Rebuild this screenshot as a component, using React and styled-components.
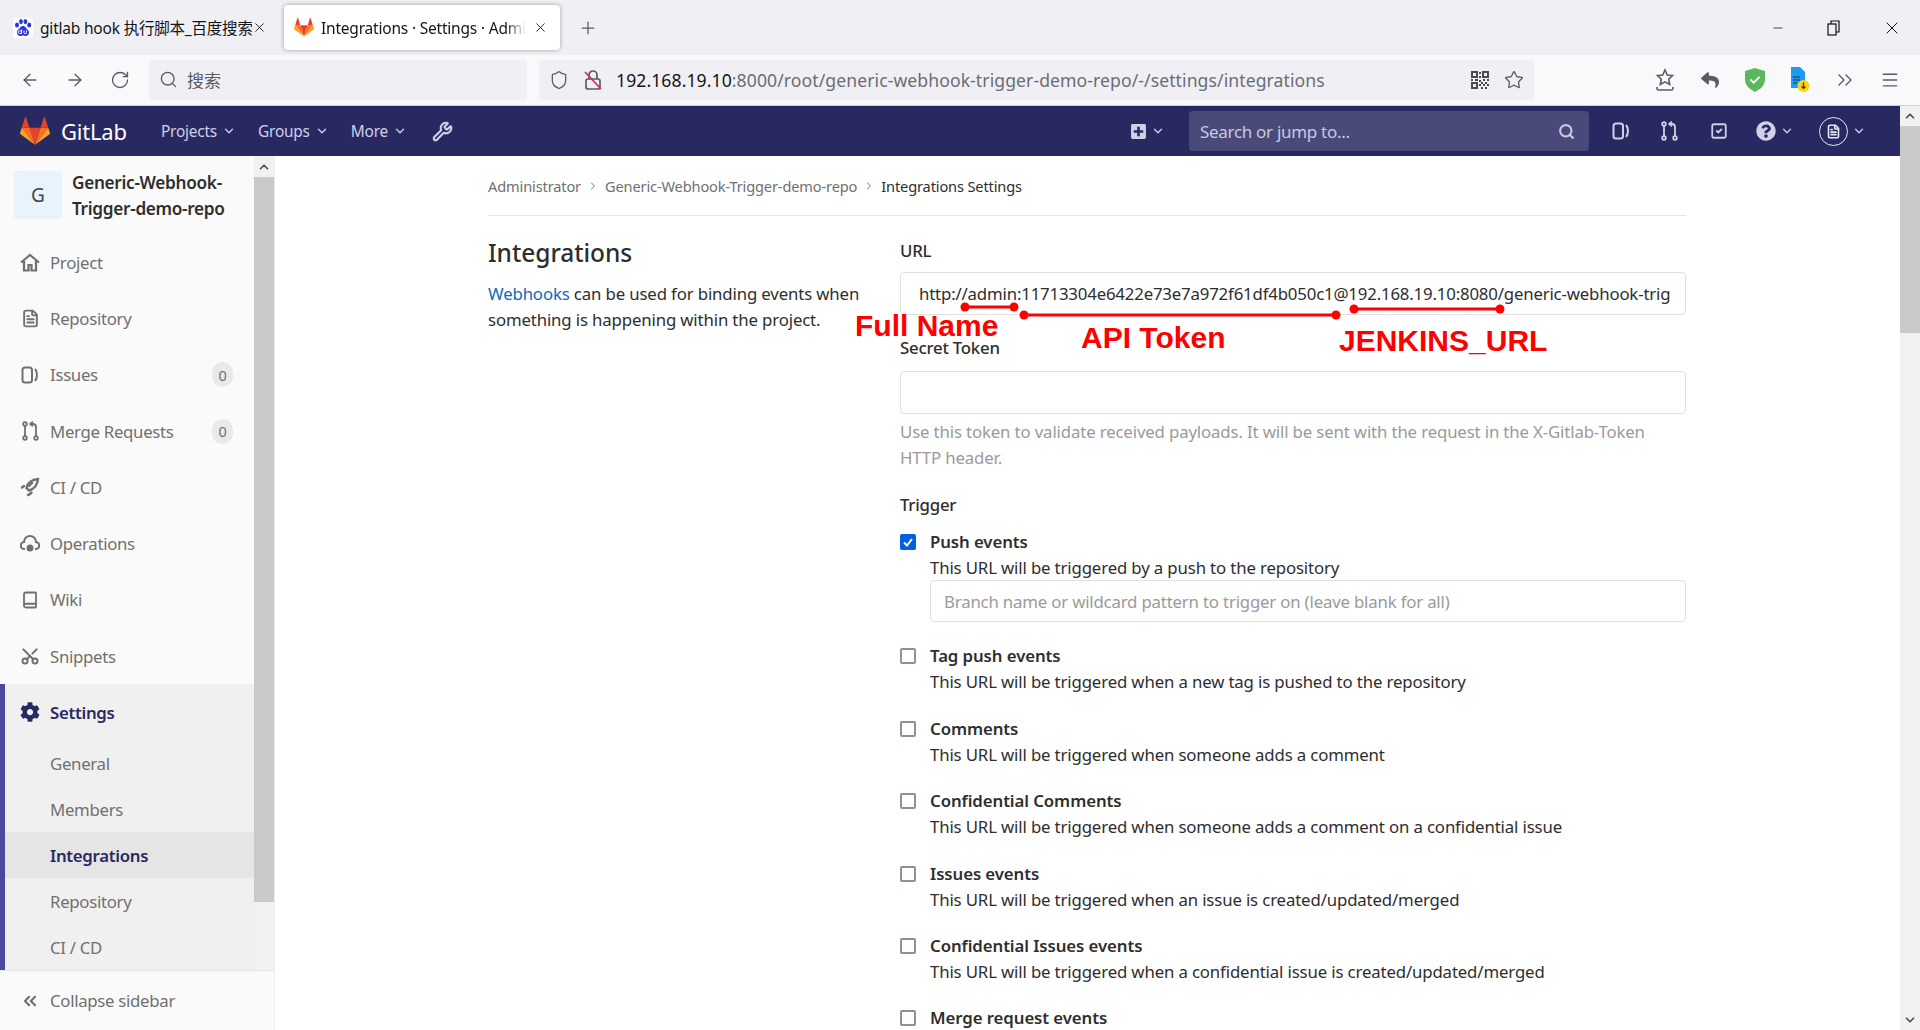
import React from 'react';
import styled, { createGlobalStyle } from 'styled-components';
import {
  ArrowLeft, ArrowRight, RotateCw, Search, Shield, Star, ChevronsRight, Menu, X, Minus, Plus,
  ChevronDown, ChevronUp, ChevronRight, Wrench, FileText, Book, Scissors, ChevronsLeft, SquareCheck,
} from 'lucide-react';
import { FaCog, FaReply, FaQuestionCircle, FaPlusSquare } from 'react-icons/fa';

const GlobalStyle = createGlobalStyle`
  html, body { margin: 0; padding: 0; height: 100%; overflow: hidden; }
  body { font-family: "Noto Sans", "Noto Sans CJK SC", sans-serif; font-size: 16.8px; color: #2e2e2e; background: #fff; }
  * { box-sizing: border-box; }
`;

const Page = styled.div`
  height: 100vh;
  display: flex;
  flex-direction: column;
  overflow: hidden;
`;

/* browser chrome */
const TabStrip = styled.div`
  height: 55px;
  flex: none;
  background: #f0f0f4;
  display: flex;
  align-items: flex-start;
  padding: 5px 0 0 0;
`;

const Tab = styled.div`
  width: ${(p) => (p.$active ? '276px' : '284px')};
  height: 45px;
  flex: none;
  display: flex;
  align-items: center;
  padding-left: ${(p) => (p.$active ? '10px' : '13px')};
  gap: 7px;
  border-radius: 4px;
  background: ${(p) => (p.$active ? '#fff' : 'transparent')};
  box-shadow: ${(p) => (p.$active ? '0 0 4px rgba(0,0,0,0.35)' : 'none')};
  font-size: 15.5px;
  letter-spacing: -0.2px;
  color: #15141a;
`;

const TabTitle = styled.span`
  width: ${(p) => (p.$active ? '205px' : '212px')};
  white-space: nowrap;
  overflow: hidden;
  -webkit-mask-image: ${(p) => (p.$active ? 'linear-gradient(to right, #000 90%, transparent)' : 'none')};
  mask-image: ${(p) => (p.$active ? 'linear-gradient(to right, #000 90%, transparent)' : 'none')};
`;

const TabClose = styled(X)`
  margin-left: ${(p) => p.$ml || 0}px;
  flex: none;
`;

const NewTab = styled.div`
  margin-left: 18px;
  height: 45px;
  display: flex;
  align-items: center;
  color: #5b5b66;
`;

const WindowControls = styled.div`
  margin-left: auto;
  height: 45px;
  width: 149px;
  display: flex;
  align-items: center;
  justify-content: space-between;
  padding: 0 18px 0 0;
  color: #111;
`;

const Toolbar = styled.div`
  height: 51px;
  flex: none;
  background: #f9f9fb;
  border-bottom: 1px solid #cfcfd8;
  display: flex;
  align-items: center;
  padding: 0 0 1px 20px;
`;

const ToolButtons = styled.div`
  display: flex;
  gap: 25px;
  color: #5b5b66;
  width: 129px;
`;

const ToolField = styled.div`
  height: 40px;
  width: ${(p) => p.$w}px;
  margin-right: 12px;
  padding: 0 10px;
  flex: none;
  background: #f0f0f4;
  border-radius: 4px;
  display: flex;
  align-items: center;
  color: #5b5b66;
`;

const SiteIcons = styled.div`
  display: flex;
  align-items: center;
  gap: 14px;
`;

const SearchHint = styled.span`
  margin-left: 9px;
  font-size: 17px;
  color: #5b5b66;
`;

const Address = styled.span`
  margin-left: 13px;
  font-size: 17.6px;
  letter-spacing: 0.08px;
  color: #6c6c75;
  white-space: nowrap;
  flex: 1;
  b { font-weight: 400; color: #15141a; }
`;

const PageActions = styled.div`
  display: flex;
  align-items: center;
  gap: 15px;
`;

const ToolExtras = styled.div`
  flex: 1;
  display: flex;
  align-items: center;
  justify-content: space-between;
  padding: 0 18px 0 107px;
  color: #5b5b66;
`;

const ExtraCell = styled.span`
  width: 24px;
  display: flex;
  align-items: center;
  justify-content: center;
`;

const Below = styled.div`
  flex: 1;
  min-height: 0;
  display: flex;
`;

const Viewport = styled.div`
  flex: 1;
  min-width: 0;
  display: flex;
  flex-direction: column;
`;

const Scrollbar = styled.div`
  width: ${(p) => p.$w}px;
  flex: none;
  background: #f1f1f1;
  display: flex;
  flex-direction: column;
  color: #505050;
`;

const ScrollArrow = styled.div`
  height: ${(p) => p.$h}px;
  flex: none;
  display: flex;
  align-items: center;
  justify-content: center;
`;

const ScrollThumb = styled.div`
  height: ${(p) => p.$h}px;
  flex: none;
  background: #c9c9c9;
`;

const ScrollSpace = styled.div`
  flex: 1;
`;

/* gitlab navbar */
const Navbar = styled.header`
  height: 50px;
  flex: none;
  background: #292961;
  display: flex;
  align-items: center;
  padding-left: 20px;
  color: #d1d0e8;
`;

const Brand = styled.div`
  display: flex;
  align-items: center;
  gap: 11px;
  width: 141px;
  font-size: 22px;
  letter-spacing: -0.2px;
  color: #fff;
`;

const NavLink = styled.div`
  display: flex;
  align-items: center;
  gap: 5px;
  margin-right: 22px;
  font-size: 15.4px;
  letter-spacing: -0.2px;
`;

const NavRight = styled.div`
  margin-left: auto;
  display: flex;
  align-items: center;
`;

const NavIcon = styled.div`
  display: flex;
  align-items: center;
  gap: 4px;
  width: ${(p) => p.$w}px;
`;

const NavSearch = styled.div`
  width: 400px;
  height: 40px;
  margin-right: 23px;
  border-radius: 4px;
  background: #4a4a7a;
  display: flex;
  align-items: center;
  justify-content: space-between;
  padding: 0 14px 0 11px;
  font-size: 17px;
  letter-spacing: -0.3px;
  color: #c9c8e0;
`;

const WrenchIcon = styled(Wrench)`
  margin-left: 3px;
`;

const Avatar = styled.div`
  width: 29px;
  height: 29px;
  border-radius: 50%;
  border: 1px solid #e6e6f2;
  display: flex;
  align-items: center;
  justify-content: center;
  background: #292961;
`;

const Content = styled.div`
  flex: 1;
  min-height: 0;
  display: flex;
`;

/* sidebar */
const Sidebar = styled.aside`
  width: 275px;
  flex: none;
  display: flex;
  flex-direction: column;
  background: #fafafa;
  border-right: 1px solid #ededed;
`;

const SidebarTop = styled.div`
  flex: 1;
  min-height: 0;
  display: flex;
`;

const SidebarNav = styled.nav`
  flex: 1;
  min-width: 0;
  display: flex;
  flex-direction: column;
`;

const ProjectHead = styled.div`
  height: 78px;
  flex: none;
  display: flex;
  padding: 15px 0 0 14px;
  gap: 10px;
`;

const ProjectAvatar = styled.div`
  width: 48px;
  height: 48px;
  flex: none;
  border-radius: 4px;
  background: #e8f3fc;
  display: flex;
  align-items: center;
  justify-content: center;
  font-size: 19px;
  color: #444;
`;

const ProjectName = styled.div`
  margin-top: -1px;
  font-size: 17.2px;
  font-weight: 600;
  line-height: 26px;
  letter-spacing: -0.3px;
  color: #2e2e2e;
`;

const NavItem = styled.div`
  height: 56.3px;
  flex: none;
  display: flex;
  align-items: center;
  padding-left: 20px;
  color: #707070;
  font-size: 16.8px;
  letter-spacing: -0.3px;
`;

const NavIconBox = styled.span`
  width: 20px;
  height: 20px;
  margin-right: 10px;
  display: flex;
  align-items: center;
  justify-content: center;
`;

const Badge = styled.span`
  margin-left: auto;
  margin-right: 21px;
  width: 21px;
  height: 25px;
  border-radius: 11px;
  background: #e9e9e9;
  display: flex;
  align-items: center;
  justify-content: center;
  font-size: 14.5px;
  color: #707070;
`;

const SettingsGroup = styled.div`
  background: #f0f0f0;
  border-left: 5px solid #4b4a9e;
  flex: 1;
  display: flex;
  flex-direction: column;
`;

const SettingsHead = styled.div`
  height: 56px;
  display: flex;
  align-items: center;
  padding-left: 15px;
  color: #292961;
  font-weight: 600;
  font-size: 16.8px;
  letter-spacing: -0.3px;
`;

const SubItem = styled.div`
  height: 46px;
  display: flex;
  align-items: center;
  padding-left: 45px;
  font-size: 16.8px;
  letter-spacing: -0.3px;
  color: ${(p) => (p.$active ? '#292961' : '#707070')};
  font-weight: ${(p) => (p.$active ? 600 : 400)};
  background: ${(p) => (p.$active ? '#e5e5e5' : 'transparent')};
`;

const Collapse = styled.div`
  height: 60px;
  flex: none;
  display: flex;
  align-items: center;
  padding-left: 20px;
  border-top: 1px solid #e5e5e5;
  color: #707070;
  font-size: 16.8px;
  letter-spacing: -0.3px;
`;

const UprightScissors = styled(Scissors)`
  transform: rotate(-90deg);
`;

/* main area */
const Main = styled.main`
  flex: 1;
  min-width: 0;
  position: relative;
  overflow: hidden;
  padding-left: 213px;
`;

const Column = styled.div`
  width: 1198px;
`;

const Breadcrumbs = styled.div`
  height: 60px;
  border-bottom: 1px solid #e5e5e5;
  display: flex;
  align-items: center;
  gap: 6px;
  font-size: 14.6px;
  letter-spacing: -0.14px;
  color: #707070;
  strong { font-weight: 400; color: #2e2e2e; }
`;

const Crumb = styled.span`
  color: #707070;
  display: flex;
  align-items: center;
`;

const SettingsGrid = styled.div`
  display: grid;
  grid-template-columns: 412px 786px;
`;

const Intro = styled.div`
  padding-top: 19px;
`;

const Heading = styled.h4`
  margin: 0;
  font-size: 24.5px;
  font-weight: 500;
  line-height: 36px;
  letter-spacing: -0.05px;
  color: #2e2e2e;
`;

const IntroText = styled.p`
  margin: 10px 0 0;
  width: 400px;
  line-height: 26px;
  letter-spacing: -0.14px;
  a { color: #1068bf; }
`;

const Form = styled.div`
  padding-top: 22px;
`;

const Label = styled.div`
  line-height: 26px;
  font-weight: 500;
  letter-spacing: -0.22px;
  color: #2e2e2e;
  margin-top: ${(p) => p.$top || 0}px;
`;

const Field = styled.div`
  height: ${(p) => p.$h || 43}px;
  margin-top: ${(p) => p.$top || 0}px;
  margin-bottom: ${(p) => p.$bottom || 0}px;
  border: 1px solid #e0e0e0;
  border-radius: 4px;
  display: flex;
  align-items: center;
  padding-left: ${(p) => p.$pad || 14}px;
  white-space: nowrap;
  overflow: hidden;
  letter-spacing: ${(p) => p.$ls || -0.14}px;
  color: ${(p) => (p.$hint ? '#9a9a9a' : '#2e2e2e')};
`;

const HelpText = styled.div`
  margin-top: 5px;
  line-height: 26px;
  letter-spacing: -0.14px;
  color: #9a9a9a;
`;

const EventList = styled.div`
  margin-top: 11px;
  display: flex;
  flex-direction: column;
  gap: 20.4px;
`;

const EventRow = styled.div`
  display: grid;
  grid-template-columns: 30px 1fr;
`;

const CheckBox = styled.span`
  width: 16px;
  height: 16px;
  margin-top: 5px;
  border-radius: 2px;
  border: ${(p) => (p.$on ? 'none' : '2px solid #8f8f9d')};
  background: ${(p) => (p.$on ? '#0060df' : '#fff')};
  display: flex;
  align-items: center;
  justify-content: center;
`;

const EventName = styled.div`
  font-weight: 600;
  line-height: 26px;
  letter-spacing: -0.08px;
  color: #2e2e2e;
`;

const EventDesc = styled.div`
  line-height: 26px;
  letter-spacing: -0.14px;
  color: #2e2e2e;
`;

/* red notes drawn over the screenshot */
const Markup = styled.svg`
  position: absolute;
  left: 0;
  top: 0;
  width: 1625px;
  height: 300px;
  pointer-events: none;
`;

const Note = styled.span`
  position: absolute;
  left: ${(p) => p.$x}px;
  top: ${(p) => p.$y}px;
  font-family: "Liberation Sans", Arial, sans-serif;
  font-weight: 700;
  font-size: 30px;
  line-height: 32px;
  color: #ff0000;
  white-space: nowrap;
`;

const Fox = ({ size = 20 }) => (
  <svg width={size} height={size * 0.93} viewBox="0 0 210 194">
    <path fill="#e24329" d="M105.06 193.66l38.64-118.92H66.42z" />
    <path fill="#fc6d26" d="M105.06 193.66L66.42 74.74H12.27z" />
    <path fill="#fca326" d="M12.27 74.74L.53 110.87a8 8 0 0 0 2.9 8.94l101.63 73.85z" />
    <path fill="#e24329" d="M12.27 74.74h54.15L43.15 3.12c-1.2-3.68-6.4-3.68-7.6 0z" />
    <path fill="#fc6d26" d="M105.06 193.66l38.64-118.92h54.15z" />
    <path fill="#fca326" d="M197.85 74.74l11.74 36.13a8 8 0 0 1-2.9 8.94l-101.63 73.85z" />
    <path fill="#e24329" d="M197.85 74.74H143.7l23.27-71.62c1.2-3.68 6.4-3.68 7.6 0z" />
  </svg>
);

const BaiduPaw = () => (
  <svg width="20" height="20" viewBox="0 0 20 20">
    <rect width="20" height="20" rx="2" fill="#fff" />
    <g fill="#2932e1">
      <ellipse cx="4" cy="7" rx="2" ry="2.6" />
      <ellipse cx="8" cy="3.6" rx="1.9" ry="2.6" />
      <ellipse cx="12.4" cy="3.6" rx="1.9" ry="2.6" />
      <ellipse cx="16.2" cy="7" rx="2" ry="2.6" />
      <path d="M10 8c-2.5 0-3 2.5-5 4-2 2-.8 6 2 6 1.2 0 2-.5 3-.5s1.8.5 3 .5c2.8 0 4-4 2-6-2-1.5-2.5-4-5-4z" />
    </g>
    <path d="M8.6 11.5v4h-2a1.3 1.3 0 0 1 0-2.6h2M11 12.5v2a1 1 0 0 0 2.5 0v-2" fill="none" stroke="#fff" strokeWidth="1" />
  </svg>
);

const RestoreIcon = () => (
  <svg width="14" height="18" viewBox="0 0 14 18" fill="none" stroke="#111" strokeWidth="1.2">
    <rect x="1" y="5" width="8" height="11" />
    <path d="M4 5V2h8v11H9" />
  </svg>
);

const CrossedLock = () => (
  <svg width="20" height="22" viewBox="0 0 20 22" fill="none" stroke="#5b5b66" strokeWidth="1.7">
    <rect x="3" y="10" width="14" height="10" rx="2" />
    <path d="M6 10V6a4 4 0 0 1 8 0v4" />
    <path d="M2 3l16 17" stroke="#e22850" />
  </svg>
);

const QrIcon = () => (
  <svg width="18" height="18" viewBox="0 0 18 18" fill="#4a4a52">
    <path fillRule="evenodd" d="M0 0h7v7H0zM2 2v3h3V2zM11 0h7v7h-7zM13 2v3h3V2zM0 11h7v7H0zM2 13v3h3v-3z" />
    <path d="M8 1h2v2H8zM8 5h2v2H8zM0 8h2v2H0zM4 8h3v2H4zM8 9h2v2H8zM12 8h2v2h-2zM16 8h2v2h-2zM10 11h2v2h-2zM14 11h2v2h-2zM8 13h2v2H8zM12 13h2v2h-2zM16 13h2v2h-2zM10 16h2v2h-2zM14 16h2v2h-2z" />
  </svg>
);

const HomeIcon = () => (
  <svg width="20" height="19" viewBox="0 0 20 19" fill="none" stroke="#707070" strokeWidth="2.2">
    <path d="M1 9.5L10 2l9 7.5" />
    <path d="M4 8v9.5h4.5V12h3v5.5H16V8" />
  </svg>
);

const IssuesIcon = ({ size = 18, color = '#707070' }) => (
  <svg width={size} height={size} viewBox="0 0 18 18" fill="none" stroke={color} strokeWidth="2">
    <rect x="1.5" y="1.5" width="9.5" height="15" rx="2.5" />
    <path d="M14 3c2.6 2.5 2.6 9.5 0 12" />
  </svg>
);

const MergeIcon = ({ color = '#707070' }) => (
  <svg width="17" height="20" viewBox="0 0 17 20" fill="none" stroke={color} strokeWidth="1.8">
    <circle cx="3" cy="3" r="1.8" />
    <circle cx="3" cy="17" r="1.8" />
    <circle cx="14" cy="17" r="1.8" />
    <path d="M3 5v10M14 15V6a3 3 0 0 0-3-3H8.5" />
    <path d="M11 .5L8 3l3 2.5" strokeWidth="1.6" />
  </svg>
);

const RocketIcon = () => (
  <svg width="20" height="20" viewBox="0 0 20 20" fill="none" stroke="#707070" strokeWidth="2.4" strokeLinecap="round">
    <path d="M18 2C12 2.5 7.5 6 6.5 11L9 13.5C14 12 17.5 8 18 2z" />
    <path d="M2 10.5L4 9M8 18c1.2-.3 2.500-1.200 3.500-2.500M9 9l3-3" />
  </svg>
);

const CloudGear = () => (
  <svg width="20" height="18" viewBox="0 0 20 18" fill="none" stroke="#707070" strokeWidth="2">
    <path d="M5 14H4.5a3.5 3.5 0 0 1-.5-7 6 6 0 0 1 12 0 3.5 3.5 0 0 1-.5 7H15" />
    <circle cx="10" cy="13" r="2.5" fill="#707070" />
  </svg>
);

const ShieldOk = () => (
  <svg width="20" height="24" viewBox="0 0 20 24">
    <path d="M10 0l10 3v8c0 6-4 10-10 13C4 21 0 17 0 11V3z" fill="#5cb85c" />
    <path d="M5.5 11.5l3.2 3.3 5.8-6" fill="none" stroke="#fff" strokeWidth="1.8" />
  </svg>
);

const FileExt = () => (
  <svg width="20" height="26" viewBox="0 0 20 26">
    <path d="M1 0h9l5 5v16H1z" fill="#1d9bf0" />
    <path d="M3 10h7M3 13h7M3 16h4" stroke="#145c96" strokeWidth="1.4" />
    <circle cx="13.5" cy="19" r="6" fill="#fcd116" />
    <path d="M13.5 15.5v6M11.5 19.5l2 2 2-2" fill="none" stroke="#333" strokeWidth="1.2" />
  </svg>
);

const SaveStar = () => (
  <svg width="20" height="24" viewBox="0 0 20 24" fill="none" stroke="#5b5b66" strokeWidth="1.6">
    <path d="M10 2l2.3 5 5.2.6-3.800 3.600 1 5.300-4.700-2.700-4.700 2.700 1-5.300L2.500 7.600 7.700 7z" />
    <path d="M2 19v1.5A1.5 1.5 0 0 0 3.500 22h13a1.500 1.500 0 0 0 1.500-1.500V19" />
  </svg>
);

const navItems = [
  { label: 'Project', icon: <HomeIcon /> },
  { label: 'Repository', icon: <FileText size={19} strokeWidth={2.4} /> },
  { label: 'Issues', icon: <IssuesIcon />, count: 0 },
  { label: 'Merge Requests', icon: <MergeIcon />, count: 0 },
  { label: 'CI / CD', icon: <RocketIcon /> },
  { label: 'Operations', icon: <CloudGear /> },
  { label: 'Wiki', icon: <Book size={18} strokeWidth={2.4} /> },
  { label: 'Snippets', icon: <UprightScissors size={20} strokeWidth={2.4} /> },
];

const subItems = [
  { label: 'General' },
  { label: 'Members' },
  { label: 'Integrations', active: true },
  { label: 'Repository' },
  { label: 'CI / CD' },
];

const events = [
  { name: 'Tag push events', desc: 'This URL will be triggered when a new tag is pushed to the repository' },
  { name: 'Comments', desc: 'This URL will be triggered when someone adds a comment' },
  { name: 'Confidential Comments', desc: 'This URL will be triggered when someone adds a comment on a confidential issue' },
  { name: 'Issues events', desc: 'This URL will be triggered when an issue is created/updated/merged' },
  { name: 'Confidential Issues events', desc: 'This URL will be triggered when a confidential issue is created/updated/merged' },
  { name: 'Merge request events' },
];

const segments = [
  { x1: 690, x2: 739, y: 151 },
  { x1: 749, x2: 1061, y: 159 },
  { x1: 1079, x2: 1225, y: 153 },
];

export default function App() {
  return (
    <Page>
      <GlobalStyle />
      <TabStrip>
        <Tab>
          <BaiduPaw />
          <TabTitle>gitlab hook 执行脚本_百度搜索</TabTitle>
          <TabClose size={15} strokeWidth={1.4} $ml={-7} />
        </Tab>
        <Tab $active>
          <Fox size={20} />
          <TabTitle $active>Integrations · Settings · Administrator</TabTitle>
          <TabClose size={15} strokeWidth={1.4} />
        </Tab>
        <NewTab><Plus size={20} strokeWidth={1.5} /></NewTab>
        <WindowControls>
          <Minus size={14} strokeWidth={1.3} />
          <RestoreIcon />
          <X size={20} strokeWidth={1.2} />
        </WindowControls>
      </TabStrip>

      <Toolbar>
        <ToolButtons>
          <ArrowLeft size={20} strokeWidth={1.6} />
          <ArrowRight size={20} strokeWidth={1.6} />
          <RotateCw size={20} strokeWidth={1.6} />
        </ToolButtons>
        <ToolField $w={378}>
          <Search size={19} strokeWidth={1.7} />
          <SearchHint>搜索</SearchHint>
        </ToolField>
        <ToolField $w={995}>
          <SiteIcons>
            <Shield size={20} strokeWidth={1.6} />
            <CrossedLock />
          </SiteIcons>
          <Address><b>192.168.19.10</b>:8000/root/generic-webhook-trigger-demo-repo/-/settings/integrations</Address>
          <PageActions>
            <QrIcon />
            <Star size={20} strokeWidth={1.6} />
          </PageActions>
        </ToolField>
        <ToolExtras>
          <ExtraCell><SaveStar /></ExtraCell>
          <ExtraCell><FaReply size={18} /></ExtraCell>
          <ExtraCell><ShieldOk /></ExtraCell>
          <ExtraCell><FileExt /></ExtraCell>
          <ExtraCell><ChevronsRight size={24} strokeWidth={1.4} /></ExtraCell>
          <ExtraCell><Menu size={20} strokeWidth={1.7} /></ExtraCell>
        </ToolExtras>
      </Toolbar>

      <Below>
        <Viewport>
          <Navbar>
            <Brand><Fox size={30} />GitLab</Brand>
            <NavLink>Projects <ChevronDown size={14} strokeWidth={2.2} /></NavLink>
            <NavLink>Groups <ChevronDown size={14} strokeWidth={2.2} /></NavLink>
            <NavLink>More <ChevronDown size={14} strokeWidth={2.2} /></NavLink>
            <WrenchIcon size={21} strokeWidth={2.4} />
            <NavRight>
              <NavIcon $w={59}><FaPlusSquare size={17} /><ChevronDown size={14} strokeWidth={2.2} /></NavIcon>
              <NavSearch>Search or jump to...<Search size={17} strokeWidth={3} /></NavSearch>
              <NavIcon $w={49}><IssuesIcon size={18} color="#d1d0e8" /></NavIcon>
              <NavIcon $w={49}><MergeIcon color="#d1d0e8" /></NavIcon>
              <NavIcon $w={46}><SquareCheck size={18} strokeWidth={2.4} /></NavIcon>
              <NavIcon $w={63}><FaQuestionCircle size={20} /><ChevronDown size={14} strokeWidth={2.2} /></NavIcon>
              <NavIcon $w={81}><Avatar><FileText size={15} strokeWidth={2.6} color="#e6e6f2" /></Avatar><ChevronDown size={14} strokeWidth={2.2} /></NavIcon>
            </NavRight>
          </Navbar>

          <Content>
            <Sidebar>
              <SidebarTop>
                <SidebarNav>
                  <ProjectHead>
                    <ProjectAvatar>G</ProjectAvatar>
                    <ProjectName>Generic-Webhook-<br />Trigger-demo-repo</ProjectName>
                  </ProjectHead>
                  {navItems.map((item) => (
                    <NavItem key={item.label}>
                      <NavIconBox>{item.icon}</NavIconBox>
                      {item.label}
                      {item.count !== undefined && <Badge>{item.count}</Badge>}
                    </NavItem>
                  ))}
                  <SettingsGroup>
                    <SettingsHead>
                      <NavIconBox><FaCog size={20} /></NavIconBox>
                      Settings
                    </SettingsHead>
                    {subItems.map((item) => (
                      <SubItem key={item.label} $active={item.active}>{item.label}</SubItem>
                    ))}
                  </SettingsGroup>
                </SidebarNav>
                <Scrollbar $w={20}>
                  <ScrollArrow $h={21}><ChevronUp size={14} strokeWidth={3} /></ScrollArrow>
                  <ScrollThumb $h={725} />
                  <ScrollSpace />
                </Scrollbar>
              </SidebarTop>
              <Collapse>
                <NavIconBox><ChevronsLeft size={22} strokeWidth={2.6} /></NavIconBox>
                Collapse sidebar
              </Collapse>
            </Sidebar>

            <Main>
              <Column>
                <Breadcrumbs>
                  Administrator <Crumb><ChevronRight size={12} /></Crumb>
                  Generic-Webhook-Trigger-demo-repo <Crumb><ChevronRight size={12} /></Crumb>
                  <strong>Integrations Settings</strong>
                </Breadcrumbs>
                <SettingsGrid>
                  <Intro>
                    <Heading>Integrations</Heading>
                    <IntroText><a>Webhooks</a> can be used for binding events when something is happening within the project.</IntroText>
                  </Intro>
                  <Form>
                    <Label>URL</Label>
                    <Field $top={8} $pad={18} $ls={-0.17}>http://admin:11713304e6422e73e7a972f61df4b050c1@192.168.19.10:8080/generic-webhook-trig</Field>
                    <Label $top={20}>Secret Token</Label>
                    <Field $top={10} />
                    <HelpText>Use this token to validate received payloads. It will be sent with the request in the X-Gitlab-Token HTTP header.</HelpText>
                    <Label $top={21}>Trigger</Label>
                    <EventList>
                      <EventRow>
                        <CheckBox $on>
                          <svg width="12" height="12" viewBox="0 0 12 12" fill="none" stroke="#fff" strokeWidth="2"><path d="M2 6.5l3 3 5-6.5" /></svg>
                        </CheckBox>
                        <div>
                          <EventName>Push events</EventName>
                          <EventDesc>This URL will be triggered by a push to the repository</EventDesc>
                          <Field $h={42} $top={-1} $bottom={1} $pad={13} $ls={-0.18} $hint>Branch name or wildcard pattern to trigger on (leave blank for all)</Field>
                        </div>
                      </EventRow>
                      {events.map((ev) => (
                        <EventRow key={ev.name}>
                          <CheckBox />
                          <div>
                            <EventName>{ev.name}</EventName>
                            {ev.desc && <EventDesc>{ev.desc}</EventDesc>}
                          </div>
                        </EventRow>
                      ))}
                    </EventList>
                  </Form>
                </SettingsGrid>
              </Column>

              <Markup viewBox="0 0 1625 300">
                {segments.map((s) => (
                  <g key={s.x1} fill="#ff0000">
                    <rect x={s.x1} y={s.y - 1.5} width={s.x2 - s.x1} height="3" />
                    <circle cx={s.x1} cy={s.y} r="4.5" />
                    <circle cx={s.x2} cy={s.y} r="4.5" />
                  </g>
                ))}
              </Markup>
              <Note $x={580} $y={154}>Full Name</Note>
              <Note $x={806} $y={166}>API Token</Note>
              <Note $x={1064} $y={169}>JENKINS_URL</Note>
            </Main>
          </Content>
        </Viewport>
        <Scrollbar $w={20}>
          <ScrollArrow $h={20}><ChevronUp size={14} strokeWidth={3} /></ScrollArrow>
          <ScrollThumb $h={207} />
          <ScrollSpace />
          <ScrollArrow $h={20}><ChevronDown size={14} strokeWidth={3} /></ScrollArrow>
        </Scrollbar>
      </Below>
    </Page>
  );
}
